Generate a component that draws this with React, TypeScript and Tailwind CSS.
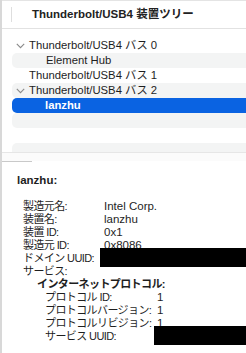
const font = { fontFamily: '"Liberation Sans", "Noto Sans CJK JP", sans-serif' };

type Row = {
  label?: string;
  indent: number;
  chevron?: boolean;
  selected?: boolean;
  shaded?: boolean;
};

const rows: Row[] = [
  { label: 'Thunderbolt/USB4 バス 0', indent: 27, chevron: true },
  { label: 'Element Hub', indent: 44, shaded: true },
  { label: 'Thunderbolt/USB4 バス 1', indent: 27 },
  { label: 'Thunderbolt/USB4 バス 2', indent: 27, chevron: true, shaded: true },
  { label: 'lanzhu', indent: 43, selected: true },
  { shaded: true, indent: 0 },
  { indent: 0 },
  { shaded: true, indent: 0 },
];

const Chevron = () => (
  <svg width="9" height="6" viewBox="0 0 9 6" className="absolute left-[4px] top-[5px]">
    <path d="M0.8 0.8 L4.5 4.6 L8.2 0.8" fill="none" stroke="#8a8a8a" strokeWidth="1.1" />
  </svg>
);

const Redacted = ({ left }: { left: number }) => (
  <div className="absolute top-[-4px] h-[19px] w-[160px] bg-black" style={{ left }} />
);

const Field = ({ label, value, labelW = 81, pl = 21 }: { label: string; value?: string; labelW?: number; pl?: number }) => (
  <div className="flex h-[13px] items-center whitespace-nowrap" style={{ paddingLeft: pl }}>
    <span className="shrink-0 tracking-[-0.6px]" style={{ width: labelW }}>{label}</span>
    <span className="text-[11.5px]">{value}</span>
  </div>
);

export default function App() {
  return (
    <div className="flex h-[353px] w-[246px] overflow-hidden bg-white text-[#1e1e1e]" style={font}>
      <div className="w-[2px] shrink-0 bg-[#d8d8d8]" />
      <div className="flex min-w-0 flex-1 flex-col">
        {/* tree pane */}
        <div className="h-[152px] shrink-0 overflow-hidden border-t border-[#e4e4e4]">
          <div className="flex h-[28px] items-center border-b border-[#e2e2e2]">
            <div className="ml-[9px] h-[15px] w-px bg-[#dedede]" />
            <span className="ml-[20px] whitespace-nowrap text-[11.5px] font-bold text-[#222]">Thunderbolt/USB4 装置ツリー</span>
          </div>
          <div className="pt-[9px]">
            {rows.map((r, i) => (
              <div
                key={i}
                className={
                  'relative ml-[10px] mr-[-10px] flex h-[15px] items-center whitespace-nowrap rounded-[5px] text-[11.3px] ' +
                  (r.selected ? 'bg-[#0a63e2] font-bold text-white' : r.shaded ? 'bg-[#f3f4f4]' : '')
                }
              >
                {r.chevron && <Chevron />}
                {r.label && <span style={{ paddingLeft: r.indent - 10 }}>{r.label}</span>}
              </div>
            ))}
          </div>
        </div>
        <div className="h-px bg-[#e6e6e6]" />

        {/* detail pane */}
        <div className="flex-1 text-[11px]">
          <div className="h-[8px] bg-[#fbfbfb]" />
          <div className="h-px w-[30px] bg-[#c9c9c9]" />
          <div className="ml-[15px] mt-[12px] h-[13px] text-[11.5px] font-bold leading-[13px]">lanzhu:</div>
          <div className="mt-[13px] leading-[13px]">
            <Field label="製造元名:" value="Intel Corp." />
            <Field label="装置名:" value="lanzhu" />
            <Field label="装置 ID:" value="0x1" />
            <Field label="製造元 ID:" value="0x8086" />
            <div className="relative">
              <Field label="ドメイン UUID:" />
              <Redacted left={98} />
            </div>
            <Field label="サービス:" />
            <div className="flex h-[13px] items-center whitespace-nowrap pl-[35px] font-bold tracking-[-0.6px]">インターネットプロトコル:</div>
            <Field label="プロトコル ID:" value="1" pl={43} labelW={112} />
            <Field label="プロトコルバージョン:" value="1" pl={43} labelW={112} />
            <Field label="プロトコルリビジョン:" value="1" pl={43} labelW={112} />
            <div className="relative">
              <Field label="サービス UUID:" pl={43} labelW={112} />
              <Redacted left={152} />
            </div>
          </div>
        </div>
      </div>
    </div>
  );
}
